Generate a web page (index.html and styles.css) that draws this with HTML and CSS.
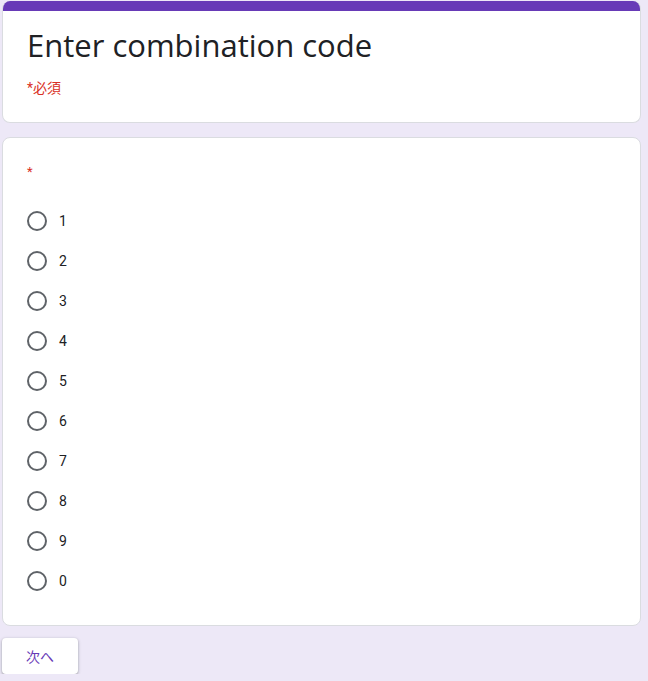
FILE: index.html
```html
<!DOCTYPE html>
<html lang="ja">
<head>
<meta charset="utf-8">
<title>Enter combination code</title>
<link rel="stylesheet" href="styles.css">
</head>
<body>
<main class="page">
  <section class="card header-card">
    <div class="accent"></div>
    <div class="header-body">
      <h1 class="title">Enter combination code</h1>
      <div class="required-note">*必須</div>
    </div>
  </section>
  <section class="card question-card">
    <div class="question-title"><span class="asterisk">*</span></div>
    <div class="options">
      <label class="option"><span class="radio"></span><span class="opt-label">1</span></label>
      <label class="option"><span class="radio"></span><span class="opt-label">2</span></label>
      <label class="option"><span class="radio"></span><span class="opt-label">3</span></label>
      <label class="option"><span class="radio"></span><span class="opt-label">4</span></label>
      <label class="option"><span class="radio"></span><span class="opt-label">5</span></label>
      <label class="option"><span class="radio"></span><span class="opt-label">6</span></label>
      <label class="option"><span class="radio"></span><span class="opt-label">7</span></label>
      <label class="option"><span class="radio"></span><span class="opt-label">8</span></label>
      <label class="option"><span class="radio"></span><span class="opt-label">9</span></label>
      <label class="option"><span class="radio"></span><span class="opt-label">0</span></label>
    </div>
  </section>
  <div class="actions">
    <button class="next-btn" type="button">次へ</button>
  </div>
</main>
</body>
</html>
```
FILE: styles.css
```css
html, body {
  margin: 0;
  padding: 0;
}
body {
  background: #ede8f7;
  font-family: Roboto, "Noto Sans CJK JP", Arial, sans-serif;
  color: #202124;
}
.page {
  width: 639px;
  margin: 1px 0 0 2px;
  display: flex;
  flex-direction: column;
}
.card {
  background: #fff;
  border: 1px solid #dadce0;
  border-radius: 8px;
  overflow: hidden;
  box-sizing: border-box;
}
.header-card {
  height: 122px;
  border-top: none;
}
.accent {
  height: 10px;
  background: #673ab7;
}
.header-body {
  padding: 14px 24px 0 24px;
}
.title {
  margin: 0;
  font-family: "Open Sans", Lato, sans-serif;
  font-weight: 400;
  font-size: 31px;
  line-height: 40px;
  color: #202124;
  letter-spacing: 0;
}
.required-note {
  margin-top: 13px;
  font-size: 14px;
  line-height: 20px;
  color: #d93025;
  font-family: Roboto, "Noto Sans CJK JP", sans-serif;
}
.question-card {
  margin-top: 14px;
  height: 489px;
  padding: 21px 24px 0 24px;
}
.question-title {
  height: 24px;
  line-height: 24px;
}
.asterisk {
  color: #d93025;
  font-size: 13px;
}
.options {
  margin-top: 18px;
  display: flex;
  flex-direction: column;
}
.option {
  height: 40px;
  display: flex;
  align-items: center;
  gap: 12px;
}
.radio {
  width: 20px;
  height: 20px;
  box-sizing: border-box;
  border: 2px solid #5f6368;
  border-radius: 50%;
  flex: none;
}
.opt-label {
  font-size: 14px;
  line-height: 20px;
  color: #202124;
  letter-spacing: 0.2px;
}
.actions {
  margin-top: 12px;
  display: flex;
}
.next-btn {
  width: 76px;
  height: 36px;
  border: none;
  border-radius: 4px;
  background: #fff;
  color: #673ab7;
  font-family: Roboto, "Noto Sans CJK JP", sans-serif;
  font-size: 14px;
  box-shadow: 0 1px 2px rgba(60,64,67,0.3), 0 1px 3px 1px rgba(60,64,67,0.15);
  padding: 0;
}
```
